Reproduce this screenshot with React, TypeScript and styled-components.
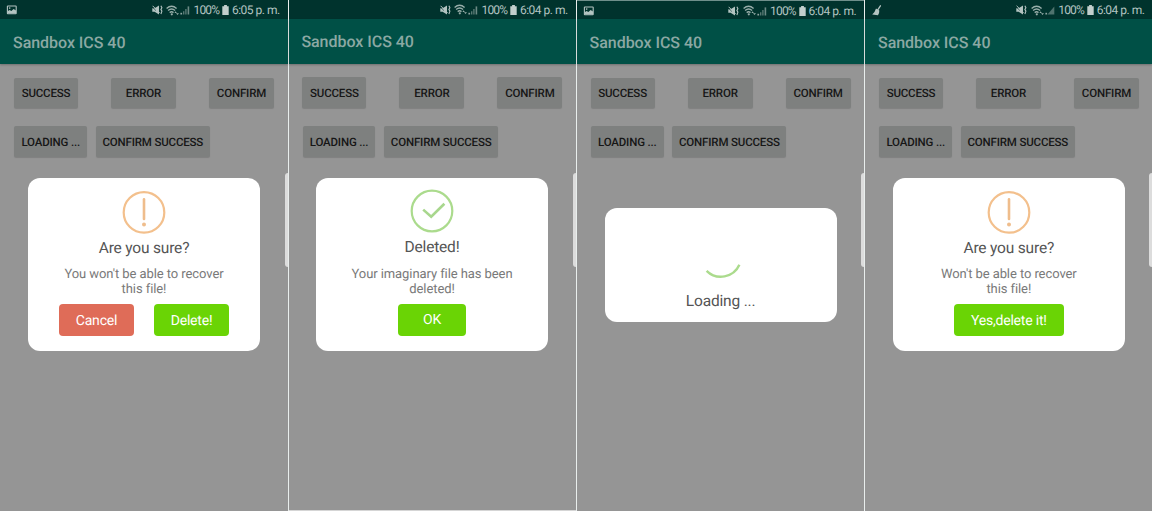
import React from "react";
import styled, { createGlobalStyle } from "styled-components";

const GlobalStyle = createGlobalStyle`
  * { box-sizing: border-box; }
  body { margin: 0; background: #959595; font-family: Roboto, "Liberation Sans", sans-serif; text-rendering: geometricPrecision; }
  button { text-rendering: geometricPrecision; }
`;

const Board = styled.main`
  display: grid;
  grid-template-columns: repeat(4, 288px);
  width: 1152px;
  height: 511px;
  overflow: hidden;
`;

const Screen = styled.section<{ $shift: number; $nudge: number; $line: boolean; $top?: boolean; $bottom?: boolean }>`
  position: relative;
  display: flex;
  flex-direction: column;
  height: 511px;
  background: #959595;
  box-shadow: ${(p) =>
    [
      p.$line && "inset 1px 0 0 #e9eeed",
      p.$top && "inset 0 1px 0 #6f8f8b",
      p.$bottom && "inset 0 -1px 0 #d5d5d5",
    ]
      .filter(Boolean)
      .join(", ") || "none"};
  padding-left: ${(p) => (p.$line ? 1 : 0)}px;
  padding-top: ${(p) => (p.$top ? 1 : 0)}px;
  --shift: ${(p) => p.$shift}px;
  --nudge: ${(p) => p.$nudge}px;
`;

const StatusBar = styled.header<{ $height: number }>`
  display: flex;
  align-items: center;
  justify-content: space-between;
  height: ${(p) => p.$height}px;
  padding: 1px calc(8.4px - var(--nudge)) 0 calc(6px + var(--shift));
  background: #00332d;
  color: #b3c4c1;
  font-size: 12px;
  letter-spacing: -0.5px;
  white-space: nowrap;
`;

const StatusGroup = styled.div`
  display: flex;
  align-items: center;
  height: 14px;
`;

const Percent = styled.span`
  margin: 0 2.8px 0 3.5px;
  line-height: 14px;
  letter-spacing: -0.85px;
`;

const Clock = styled.span`
  margin-left: 3px;
  line-height: 14px;
`;

const AppBar = styled.div`
  display: flex;
  align-items: center;
  height: 45px;
  padding: 1px 0 0 calc(13px + var(--shift));
  background: #005046;
  color: #8ba8a3;
  font-size: 16px;
  font-weight: 500;
  letter-spacing: -0.04px;
  box-shadow: 0 1px 2px rgba(0, 0, 0, 0.25);
`;

const Actions = styled.div`
  display: flex;
  flex-direction: column;
  gap: 18px;
  padding: 13.6px 0 0 calc(14px + var(--shift));
`;

const ActionRow = styled.div<{ $gap: number; $indent?: number }>`
  display: flex;
  gap: ${(p) => p.$gap}px;
  padding-left: ${(p) => p.$indent ?? 0}px;
`;

const ActionButton = styled.button<{ $width: number }>`
  width: ${(p) => p.$width}px;
  height: 30.8px;
  padding: 1px 0 0;
  border: 0;
  border-radius: 2px;
  background: #7e807f;
  color: #161616;
  font: 500 11.5px Roboto, sans-serif;
  letter-spacing: -0.17px;
  white-space: nowrap;
  box-shadow: 0 1px 1px rgba(0, 0, 0, 0.14);
`;

const Dialog = styled.div<{ $top: number; $height: number }>`
  position: absolute;
  left: calc(28px + var(--nudge));
  top: ${(p) => p.$top}px;
  width: 232px;
  height: ${(p) => p.$height}px;
  display: flex;
  flex-direction: column;
  align-items: center;
  padding-top: 11.2px;
  border-radius: 12px;
  background: #fff;
  text-align: center;
`;

const DialogTitle = styled.h2`
  margin: 4px 0 0;
  font-size: 15.5px;
  line-height: 20px;
  font-weight: 400;
  letter-spacing: -0.18px;
  color: #555;
`;

const DialogText = styled.p`
  margin: 9.5px 0 0;
  font-size: 13px;
  line-height: 15px;
  letter-spacing: -0.08px;
  color: #797979;
  white-space: pre-line;
`;

const DialogButtons = styled.div`
  display: flex;
  gap: 20px;
  margin-top: 7.3px;
`;

const DialogButton = styled.button<{ $width: number; $tone: string }>`
  width: ${(p) => p.$width}px;
  height: 32px;
  padding: 1px 0 0;
  border: 0;
  border-radius: 4px;
  background: ${(p) => p.$tone};
  color: #fff;
  font: 400 14px Roboto, sans-serif;
  letter-spacing: -0.2px;
`;

const EdgeHandle = styled.span`
  position: absolute;
  right: 0;
  top: 173px;
  width: 3px;
  height: 94px;
  border-radius: 3px 0 0 3px;
  background: #dcdcdc;
`;

const GREEN = "#6ad405";
const RED = "#df6c58";

const MuteIcon = styled.svg.attrs({
  width: 11,
  height: 10,
  viewBox: "0 0 11 10",
  children: (
    <>
      <path d="M0.3 3.2h2.3L7 0.4v9L2.6 6.8H0.3z" fill="#b3c4c1" />
      <path d="M0.2 2 4 5.6" stroke="#00332d" strokeWidth="0.6" />
      <path d="M0.6 0.8 7.6 7.8" stroke="#b3c4c1" strokeWidth="1" />
      <path d="M8.9 0.8 9.9 2.7 8.9 4.4 9.9 6.1 8.9 9" stroke="#b3c4c1" strokeWidth="1.1" fill="none" />
    </>
  ),
})`
  margin-right: 3.5px;
`;

const WifiIcon = () => (
  <svg width="14" height="11" viewBox="0 0 14 11">
    <g fill="none" stroke="#98aeaa" strokeWidth="1.4">
      <path d="M0.6 3.5Q5.6-0.9 10.6 3.5" />
      <path d="M2.1 5.6Q5.6 2.5 9.1 5.6" />
      <path d="M3.7 7.6Q5.6 6 7.5 7.6" />
    </g>
    <circle cx="5.8" cy="9.3" r="1.1" fill="#98aeaa" />
    <path d="M8.4 8 9.6 6.3l1.2 1.7zM10 8.2h3L11.5 10z" fill="#98aeaa" />
  </svg>
);

const SignalIcon = ({ strong }: { strong?: boolean }) => (
  <svg width="10" height="10" viewBox="0 0 10 10">
    <path d="M0.4 7.8h1.7v1.7H0.4z" fill="#8fa6a2" />
    {strong ? (
      <path d="M2.5 9.5 9.3 1.4v8.1z" fill="#4f736e" />
    ) : (
      <>
        <path d="M3 6.2h1.4v3.3H3zM5.2 4h1.4v5.5H5.2z" fill="#577873" />
        <path d="M7.6 1.4h1.6v8.1H7.6z" fill="#6c8a85" />
      </>
    )}
  </svg>
);

const BatteryIcon = () => (
  <svg width="7" height="10" viewBox="0 0 7 10">
    <path d="M2.1 0h2.8v1.2H6.7V10H0.3V1.2h1.8z" fill="#c2cfcd" />
  </svg>
);

const PictureIcon = () => (
  <svg width="11" height="10" viewBox="0 0 11 10">
    <rect x="1.4" y="1" width="8.8" height="7.8" rx="0.6" fill="none" stroke="#b3c4c1" strokeWidth="1.1" />
    <path d="M1.6 8.6V6.2l2-1.2 1.8 1 2.2-2 2.4 1.6v3z" fill="#b3c4c1" />
    <circle cx="3.7" cy="3.1" r="0.8" fill="#b3c4c1" />
  </svg>
);

const BroomIcon = () => (
  <svg width="11" height="11" viewBox="0 0 11 11">
    <path d="M9.4 0.8 6.6 5.2" stroke="#b3c4c1" strokeWidth="1.3" strokeLinecap="round" />
    <path d="M5 3.6 8.3 5.6Q8.4 8.8 7 10.3L1.2 9.4Q4 7.4 5 3.6z" fill="#b3c4c1" />
  </svg>
);

const WarningIcon = () => (
  <svg width="44" height="44" viewBox="0 0 44 44">
    <circle cx="22" cy="22.4" r="20.3" fill="none" stroke="#f3c08d" strokeWidth="2.2" />
    <path d="M22 9.4v19.5" stroke="#efbd8c" strokeWidth="2.6" strokeLinecap="round" />
    <circle cx="22" cy="34.4" r="2" fill="#efbd8c" />
  </svg>
);

const CheckIcon = () => (
  <svg width="44" height="44" viewBox="0 0 44 44">
    <circle cx="22" cy="22" r="20.3" fill="none" stroke="#abdb8d" strokeWidth="2.2" />
    <path d="M13.2 20.6 21.2 27.8 34.4 14.8" stroke="#a8d78d" strokeWidth="2.6" fill="none" />
  </svg>
);

const Spinner = () => (
  <svg width="44" height="44" viewBox="0 0 44 44">
    <path d="M7.6 35.8A20.3 20.3 0 0 0 40.4 29.8" stroke="#abdb8d" strokeWidth="2.4" fill="none" />
  </svg>
);

const SpinnerWrap = styled.div`
  margin: 16.5px 0 7.6px;
  height: 44px;
`;

interface PhoneProps {
  time: string;
  notice?: React.ReactNode;
  shift?: number;
  nudge?: number;
  line?: boolean;
  top?: boolean;
  bottom?: boolean;
  statusHeight: number;
  strong?: boolean;
  children: React.ReactNode;
}

const Phone = ({
  time,
  notice,
  shift = 0,
  nudge = 0,
  line,
  top,
  bottom,
  statusHeight,
  strong,
  children,
}: PhoneProps) => (
  <Screen $shift={shift} $nudge={nudge} $line={!!line} $top={top} $bottom={bottom}>
    <StatusBar $height={statusHeight}>
      <StatusGroup>{notice}</StatusGroup>
      <StatusGroup>
        <MuteIcon />
        <WifiIcon />
        <SignalIcon strong={strong} />
        <Percent>100%</Percent>
        <BatteryIcon />
        <Clock>{time}</Clock>
      </StatusGroup>
    </StatusBar>
    <AppBar>Sandbox ICS 40</AppBar>
    <Actions>
      <ActionRow $gap={33}>
        <ActionButton $width={64}>SUCCESS</ActionButton>
        <ActionButton $width={65}>ERROR</ActionButton>
        <ActionButton $width={65}>CONFIRM</ActionButton>
      </ActionRow>
      <ActionRow $gap={8.8} $indent={0.4}>
        <ActionButton $width={72.6}>LOADING ...</ActionButton>
        <ActionButton $width={114}>CONFIRM SUCCESS</ActionButton>
      </ActionRow>
    </Actions>
    {children}
    <EdgeHandle />
  </Screen>
);

export default function App() {
  return (
    <>
      <GlobalStyle />
      <Board>
        <Phone time="6:05 p. m." notice={<PictureIcon />} statusHeight={19}>
          <Dialog $top={178.4} $height={172.7}>
            <WarningIcon />
            <DialogTitle>Are you sure?</DialogTitle>
            <DialogText>{"You won't be able to recover\nthis file!"}</DialogText>
            <DialogButtons>
              <DialogButton $width={75} $tone={RED}>Cancel</DialogButton>
              <DialogButton $width={75} $tone={GREEN}>Delete!</DialogButton>
            </DialogButtons>
          </Dialog>
        </Phone>
        <Phone time="6:04 p. m." shift={-0.6} nudge={0} line bottom statusHeight={18.5}>
          <Dialog $top={178} $height={172.5}>
            <CheckIcon />
            <DialogTitle>Deleted!</DialogTitle>
            <DialogText>{"Your imaginary file has been\ndeleted!"}</DialogText>
            <DialogButtons>
              <DialogButton $width={68} $tone={GREEN}>OK</DialogButton>
            </DialogButtons>
          </Dialog>
        </Phone>
        <Phone time="6:04 p. m." notice={<PictureIcon />} shift={-0.4} nudge={0.6} line top statusHeight={18}>
          <Dialog $top={207.6} $height={114.7}>
            <SpinnerWrap>
              <Spinner />
            </SpinnerWrap>
            <DialogTitle>Loading ...</DialogTitle>
          </Dialog>
        </Phone>
        <Phone time="6:04 p. m." notice={<BroomIcon />} nudge={0.8} line statusHeight={19} strong>
          <Dialog $top={178.4} $height={172.7}>
            <WarningIcon />
            <DialogTitle>Are you sure?</DialogTitle>
            <DialogText>{"Won't be able to recover\nthis file!"}</DialogText>
            <DialogButtons>
              <DialogButton $width={110} $tone={GREEN}>Yes,delete it!</DialogButton>
            </DialogButtons>
          </Dialog>
        </Phone>
      </Board>
    </>
  );
}
